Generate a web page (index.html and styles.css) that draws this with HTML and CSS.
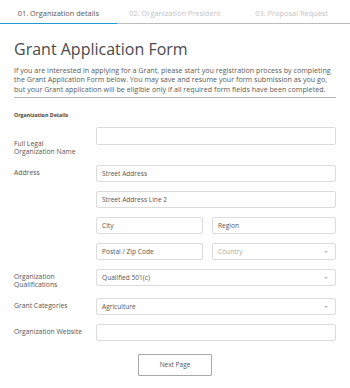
FILE: index.html
```html
<!DOCTYPE html>
<html lang="en">
  <head>
    <meta charset="UTF-8" />
    <meta name="viewport" content="width=device-width, initial-scale=1.0" />
    <title>Grant Application Form</title>
    <link rel="stylesheet" href="styles.css">
  </head>
  <body>
    <div class="tabs">
      <div class="tab active">01. Organization details</div>
      <div class="tab">02. Organization President</div>
      <div class="tab">03. Proposal Request</div>
    </div>

    <div class="con">
      <h1>Grant Application Form</h1>
      <p class="intro">
        If you are interested in applying for a Grant, please start you registration process by completing<br />
        the Grant Application Form below. You may save and resume your form submission as you go,<br />
        but your Grant application will be eligible only if all required form fields have been completed.
      </p>
      <hr />
      <h2>Organization Details</h2>

      <div class="field">
        <label class="label first">Full Legal<br />Organization Name</label>
        <div class="inputs">
          <input class="box tall" type="text" />
        </div>
      </div>

      <div class="field">
        <label class="label">Address</label>
        <div class="inputs">
          <input class="box" type="text" placeholder="Street Address" />
          <input class="box" type="text" placeholder="Street Address Line 2" />
          <div class="pair">
            <input class="box" type="text" placeholder="City" />
            <input class="box" type="text" placeholder="Region" />
          </div>
          <div class="pair">
            <input class="box" type="text" placeholder="Postal / Zip Code" />
            <div class="box select muted">Country</div>
          </div>
        </div>
      </div>

      <div class="field">
        <label class="label">Organization<br />Qualifications</label>
        <div class="inputs">
          <div class="box select">Qualified 501(c)</div>
        </div>
      </div>

      <div class="field">
        <label class="label">Grant Categories</label>
        <div class="inputs">
          <div class="box select">Agriculture</div>
        </div>
      </div>

      <div class="field">
        <label class="label">Organization Website</label>
        <div class="inputs">
          <input class="box" type="text" />
        </div>
      </div>

      <div class="actions">
        <button id="next-btn">Next Page</button>
      </div>
    </div>
  </body>
</html>
```

FILE: styles.css
```css
body {
  margin: 0;
  background-color: #fff;
  font-family: "Open Sans", sans-serif;
  color: #555;
}

.tabs {
  display: flex;
}

.tab {
  flex: 1;
  text-align: center;
  font-size: 7.4px;
  line-height: 10px;
  padding: 8px 0 5px;
  color: #c4c4c4;
  border-bottom: 1.5px solid #bdbdbd;
}

.tab.active {
  color: #555;
  border-bottom-color: #1e9ad6;
}

.con {
  padding: 0 14px;
}

h1 {
  font-size: 16px;
  font-weight: normal;
  line-height: 22px;
  color: #4a4a4a;
  margin: 14px 0 6px;
}

.intro {
  font-size: 7.15px;
  line-height: 9.3px;
  margin: 0;
  color: #5a5a5a;
  white-space: nowrap;
}

hr {
  border: none;
  border-top: 1px solid #b5b5b5;
  margin: 3px 0 0;
}

h2 {
  font-size: 5.3px;
  font-weight: bold;
  line-height: 8px;
  color: #444;
  margin: 13px 0 8px;
}

.field {
  display: grid;
  grid-template-columns: 82px 1fr;
  margin-bottom: 9px;
}

.label {
  font-size: 6.8px;
  line-height: 8px;
  padding-top: 4.2px;
  color: #555;
}

.label.first {
  padding-top: 13px;
}

.inputs {
  display: flex;
  flex-direction: column;
  gap: 9px;
}

.pair {
  display: grid;
  grid-template-columns: 107px 1fr;
  gap: 9px;
}

.box {
  box-sizing: border-box;
  height: 17px;
  width: 100%;
  margin: 0;
  border: 1px solid #dcdcdc;
  border-radius: 2px;
  padding: 0 5px;
  font-family: "Open Sans", sans-serif;
  font-size: 6.6px;
  line-height: 15px;
  color: #555;
  background: #fff;
}

.box.tall {
  height: 18px;
}

.box::placeholder {
  color: #555;
}

.select {
  position: relative;
}

.select::after {
  content: "";
  position: absolute;
  right: 7px;
  top: 7px;
  border-left: 2.5px solid transparent;
  border-right: 2.5px solid transparent;
  border-top: 2.5px solid #bbb;
}

.muted {
  color: #aaa;
}

.actions {
  text-align: center;
}

#next-btn {
  width: 74px;
  height: 22px;
  background: #fff;
  border: 1px solid #a9a9a9;
  border-radius: 1px;
  font-family: "Open Sans", sans-serif;
  font-size: 6.5px;
  color: #555;
  cursor: pointer;
}
```
